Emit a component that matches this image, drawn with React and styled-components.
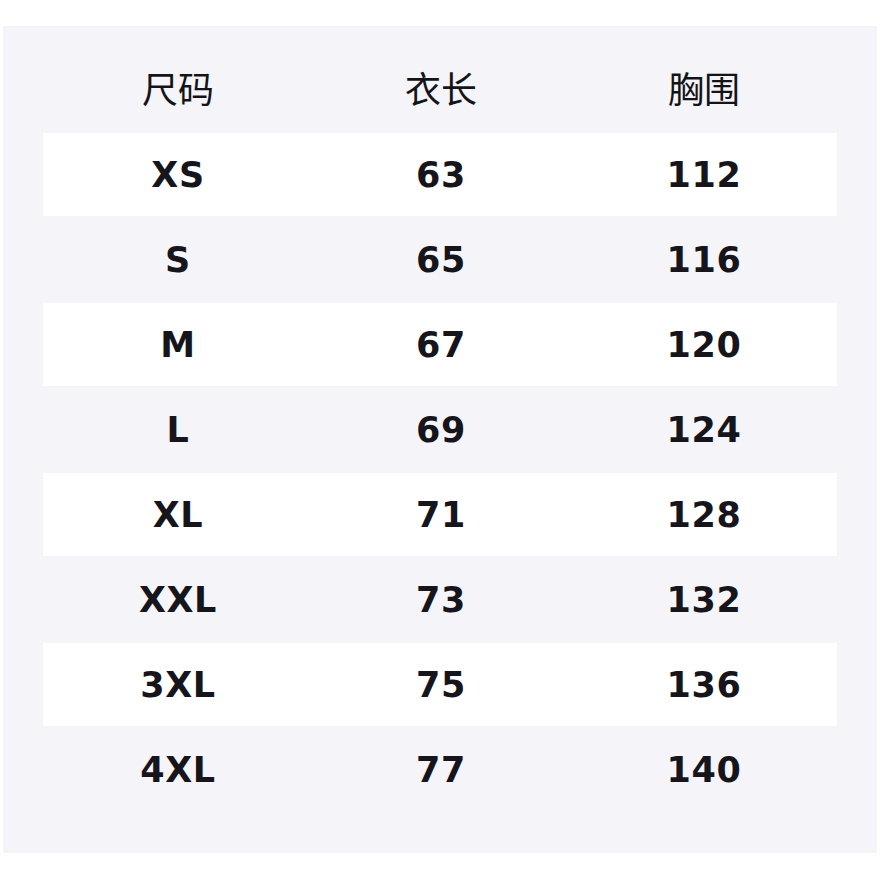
import styled, { createGlobalStyle } from 'styled-components'

const GlobalStyle = createGlobalStyle`
  html, body {
    margin: 0;
    padding: 0;
    background: #ffffff;
  }
`

const sizes = [
  ['XS', 63, 112],
  ['S', 65, 116],
  ['M', 67, 120],
  ['L', 69, 124],
  ['XL', 71, 128],
  ['XXL', 73, 132],
  ['3XL', 75, 136],
  ['4XL', 77, 140],
]

const Panel = styled.div`
  margin: 26px 3px 0 3px;
  width: 874px;
  box-sizing: border-box;
  padding: 22px 40px 40px 40px;
  background: #f4f4f9;
`

const Table = styled.div`
  display: flex;
  flex-direction: column;
`

const Row = styled.div`
  display: grid;
  grid-template-columns: repeat(3, 263px);
  justify-content: center;
  padding-left: 2px;
  height: 85px;
  align-items: center;
  background: ${(p) => (p.$striped ? '#ffffff' : 'transparent')};
  box-shadow: ${(p) => (p.$striped ? 'inset 0 -2px 0 #f4f4f9' : 'none')};
`

const HeadCell = styled.div`
  text-align: center;
  font-family: 'Noto Sans CJK SC', 'Noto Sans', sans-serif;
  font-size: 36px;
  font-weight: 400;
  color: #141418;
  line-height: 1;
  padding-bottom: 8px;
`

const Cell = styled.div`
  text-align: center;
  font-family: 'DejaVu Sans', 'Noto Sans', sans-serif;
  font-size: 35px;
  font-weight: 700;
  color: #16151b;
  line-height: 1;
  letter-spacing: 0.6px;
`

export default function App() {
  return (
    <>
      <GlobalStyle />
      <Panel>
        <Table>
          <Row>
            <HeadCell>尺码</HeadCell>
            <HeadCell>衣长</HeadCell>
            <HeadCell>胸围</HeadCell>
          </Row>
          {sizes.map(([size, length, chest], idx) => (
            <Row key={size} $striped={idx % 2 === 0}>
              <Cell>{size}</Cell>
              <Cell>{length}</Cell>
              <Cell>{chest}</Cell>
            </Row>
          ))}
        </Table>
      </Panel>
    </>
  )
}
